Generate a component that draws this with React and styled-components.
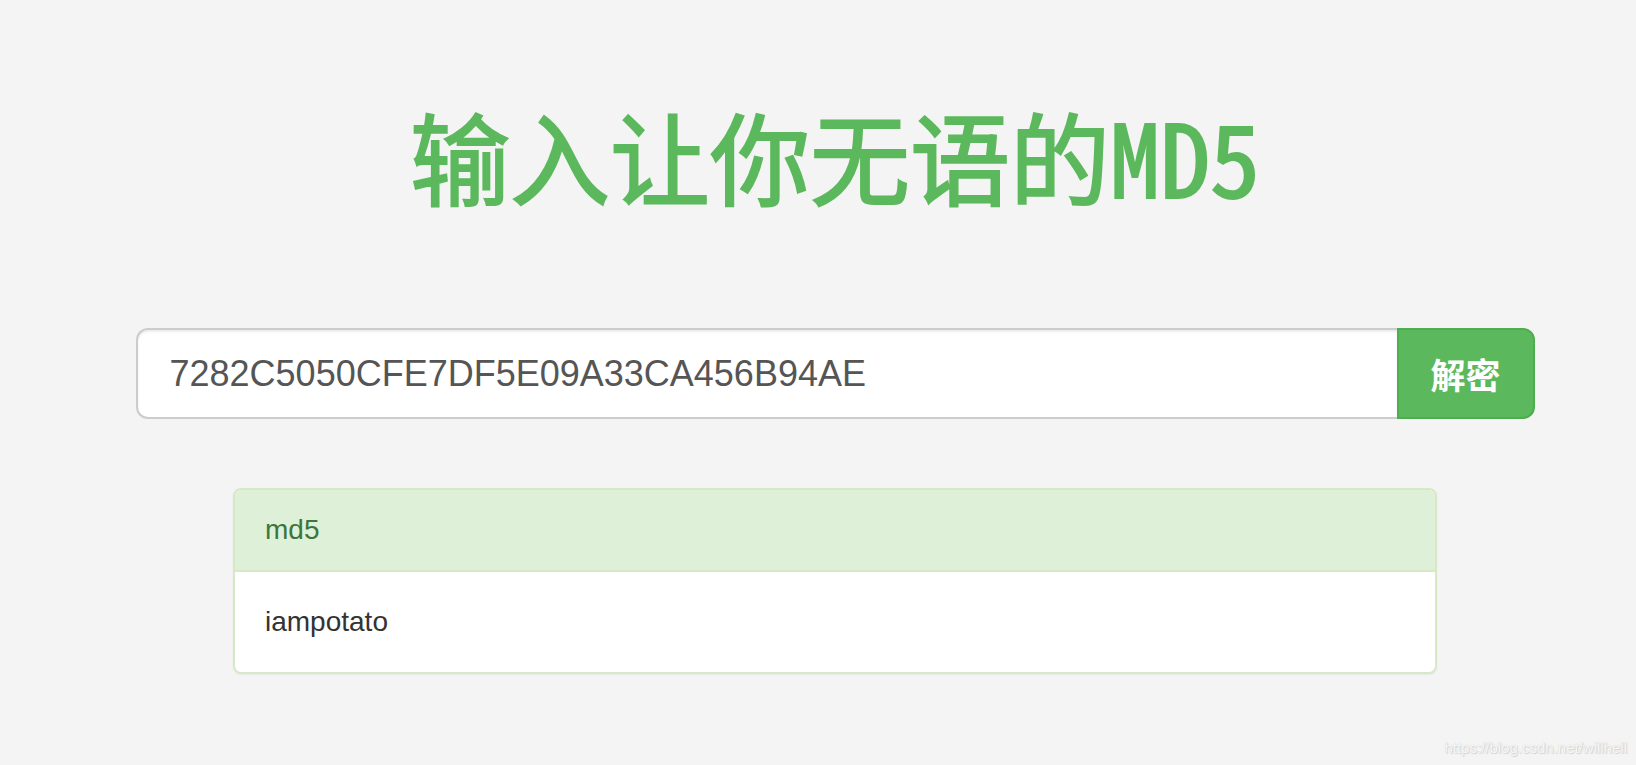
import React from 'react';
import styled, { createGlobalStyle } from 'styled-components';

const GlobalStyle = createGlobalStyle`
  html, body {
    margin: 0;
    padding: 0;
    background: #f4f4f4;
    font-family: "Liberation Sans", Arial, "Noto Sans CJK SC", sans-serif;
  }
`;

const Page = styled.div`
  position: relative;
  min-height: 765px;
  padding: 100px 0 0 34px;
  box-sizing: border-box;
`;

const Inner = styled.div`
  width: 1399px;
  margin: 0 auto;
  display: flex;
  flex-direction: column;
  align-items: center;
`;

const Title = styled.h1`
  margin: 0;
  font-family: "Noto Sans Mono CJK SC", "Noto Sans CJK SC", sans-serif;
  font-size: 100px;
  font-weight: 400;
  line-height: 110px;
  color: #5cb85c;
  -webkit-text-stroke: 2px #5cb85c;
  text-align: center;
`;

const InputGroup = styled.div`
  margin-top: 118px;
  width: 100%;
  display: flex;
  height: 91px;
`;

const HashInput = styled.input`
  flex: 1;
  min-width: 0;
  box-sizing: border-box;
  height: 100%;
  padding: 0 32px;
  border: 2px solid #ccc;
  border-right: none;
  border-radius: 12px 0 0 12px;
  background: #fff;
  box-shadow: inset 0 2px 2px rgba(0, 0, 0, 0.075);
  font-family: "Liberation Sans", Arial, sans-serif;
  font-size: 36px;
  color: #555;
  outline: none;
`;

const Button = styled.button`
  width: 138px;
  height: 100%;
  box-sizing: border-box;
  border: 2px solid #4cae4c;
  border-radius: 0 12px 12px 0;
  background: #5cb85c;
  color: #fff;
  font-family: "Noto Sans CJK SC", sans-serif;
  font-size: 35px;
  font-weight: 700;
  cursor: pointer;
`;

const Panel = styled.div`
  margin-top: 69px;
  width: 1204px;
  box-sizing: border-box;
  border: 2px solid #d6e9c6;
  border-radius: 8px;
  background: #fff;
  box-shadow: 0 1px 2px rgba(0, 0, 0, 0.05);
  overflow: hidden;
`;

const PanelHeading = styled.div`
  padding: 20px 30px;
  background: #dff0d8;
  border-bottom: 2px solid #d6e9c6;
  color: #3c763d;
  font-size: 28px;
  line-height: 40px;
`;

const PanelBody = styled.div`
  padding: 30px;
  color: #333;
  font-size: 28px;
  line-height: 40px;
`;

const Watermark = styled.div`
  position: absolute;
  right: 9px;
  bottom: 9px;
  font-family: "Liberation Sans", Arial, sans-serif;
  font-size: 15px;
  color: #f7f7f7;
  text-shadow: 0 0 1px #c8c8c8, 1px 1px 1px #d4d4d4;
`;

export default function App() {
  return (
    <Page>
      <GlobalStyle />
      <Inner>
        <Title>输入让你无语的MD5</Title>
        <InputGroup>
          <HashInput defaultValue="7282C5050CFE7DF5E09A33CA456B94AE" />
          <Button>解密</Button>
        </InputGroup>
        <Panel>
          <PanelHeading>md5</PanelHeading>
          <PanelBody>iampotato</PanelBody>
        </Panel>
      </Inner>
      <Watermark>https://blog.csdn.net/willhell</Watermark>
    </Page>
  );
}
